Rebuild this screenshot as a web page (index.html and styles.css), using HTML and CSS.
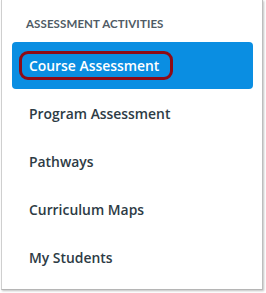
FILE: index.html
```html
<!DOCTYPE html>
<html>
<head>
<meta charset="utf-8">
<link rel="stylesheet" href="styles.css">
</head>
<body>
<div class="panel">
  <div class="heading">ASSESSMENT ACTIVITIES</div>
  <ul class="menu">
    <li class="item active"><span class="highlight">Course Assessment</span></li>
    <li class="item"><span class="label">Program Assessment</span></li>
    <li class="item"><span class="label">Pathways</span></li>
    <li class="item"><span class="label">Curriculum Maps</span></li>
    <li class="item"><span class="label">My Students</span></li>
  </ul>
</div>
</body>
</html>
```
FILE: styles.css
```css
html, body {
  margin: 0;
  padding: 0;
  background: #ffffff;
}
body {
  font-family: Lato, "Liberation Sans", sans-serif;
  width: 266px;
  height: 293px;
  overflow: hidden;
}
.panel {
  box-sizing: border-box;
  margin-left: 1px;
  width: 262px;
  height: 290px;
  border-left: 1px solid #cfcfcf;
  border-right: 1px solid #bdbdbd;
  border-bottom: 1px solid #b5b5b5;
  box-shadow: 1px 1px 2px rgba(0, 0, 0, 0.25);
  padding: 16px 9px 0 10px;
}
.heading {
  font-size: 11.5px;
  font-weight: 700;
  color: #4f5b65;
  letter-spacing: 0.1px;
  padding-left: 14px;
  line-height: 16px;
  height: 26px;
}
.menu {
  list-style: none;
  margin: 0;
  padding: 0;
}
.item {
  height: 48px;
  display: flex;
  align-items: center;
  font-family: "Open Sans", Lato, sans-serif;
  font-size: 13.9px;
  font-weight: 600;
  color: #2d3b45;
  padding-bottom: 2px;
  box-sizing: border-box;
}
.label {
  padding-left: 17px;
}
.item.active {
  height: 47px;
  margin-bottom: 1px;
  background: #0a8ee2;
  border-radius: 4px;
  color: #ffffff;
  padding-left: 7px;
  padding-bottom: 0;
}
.highlight {
  display: flex;
  align-items: center;
  box-sizing: border-box;
  height: 29px;
  width: 154px;
  border: 3px solid #8e0b16;
  border-radius: 9px;
  padding-left: 7px;
  padding-bottom: 1px;
}
```
